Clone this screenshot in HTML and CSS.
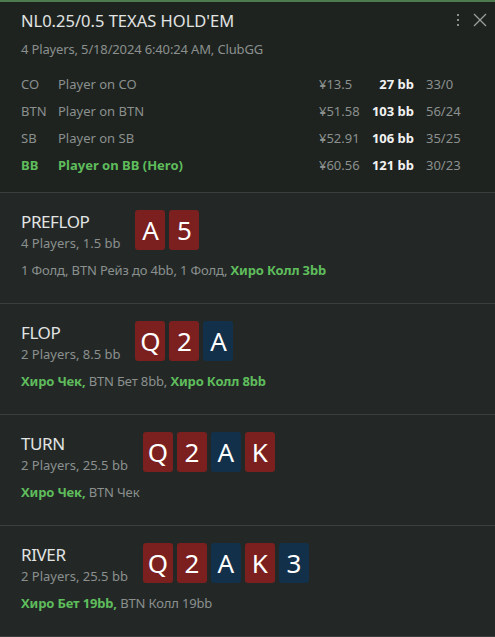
FILE: index.html
```html
<!DOCTYPE html>
<html>
<head>
<meta charset="utf-8">
<link rel="stylesheet" href="styles.css">
</head>
<body>
<div class="app">
  <header class="head">
    <div class="head-top">
      <div class="title">NL0.25/0.5 TEXAS HOLD'EM</div>
      <div class="tools">
        <svg class="dots" width="4" height="14" viewBox="0 0 4 14"><rect x="1" y="1" width="2" height="2" fill="#8a8f8c"/><rect x="1" y="6" width="2" height="2" fill="#8a8f8c"/><rect x="1" y="11" width="2" height="2" fill="#8a8f8c"/></svg>
        <svg class="close" width="14" height="14" viewBox="0 0 14 14"><path d="M1 1 L13 13 M13 1 L1 13" stroke="#9a9e9c" stroke-width="1.3" fill="none"/></svg>
      </div>
    </div>
    <div class="sub">4 Players, 5/18/2024 6:40:24 AM, ClubGG</div>
    <div class="players">
      <div class="prow"><span class="pos">CO</span><span class="pname">Player on CO</span><span class="money">¥13.5</span><span class="bb">27 bb</span><span class="stat">33/0</span></div>
      <div class="prow"><span class="pos">BTN</span><span class="pname">Player on BTN</span><span class="money">¥51.58</span><span class="bb">103 bb</span><span class="stat">56/24</span></div>
      <div class="prow"><span class="pos">SB</span><span class="pname">Player on SB</span><span class="money">¥52.91</span><span class="bb">106 bb</span><span class="stat">35/25</span></div>
      <div class="prow hero"><span class="pos">BB</span><span class="pname">Player on BB (Hero)</span><span class="money">¥60.56</span><span class="bb">121 bb</span><span class="stat">30/23</span></div>
    </div>
  </header>

  <section class="street">
    <div class="street-top">
      <div class="sinfo"><div class="sname">PREFLOP</div><div class="smeta">4 Players, 1.5 bb</div></div>
      <div class="cards"><span class="card red">A</span><span class="card red">5</span></div>
    </div>
    <div class="actions">1 Фолд, BTN Рейз до 4bb, 1 Фолд, <b class="g">Хиро Колл 3bb</b></div>
  </section>

  <section class="street">
    <div class="street-top">
      <div class="sinfo"><div class="sname">FLOP</div><div class="smeta">2 Players, 8.5 bb</div></div>
      <div class="cards"><span class="card red">Q</span><span class="card red">2</span><span class="card blue">A</span></div>
    </div>
    <div class="actions"><b class="g">Хиро Чек,</b> BTN Бет 8bb, <b class="g">Хиро Колл 8bb</b></div>
  </section>

  <section class="street">
    <div class="street-top">
      <div class="sinfo"><div class="sname">TURN</div><div class="smeta">2 Players, 25.5 bb</div></div>
      <div class="cards"><span class="card red">Q</span><span class="card red">2</span><span class="card blue">A</span><span class="card red">K</span></div>
    </div>
    <div class="actions"><b class="g">Хиро Чек,</b> BTN Чек</div>
  </section>

  <section class="street">
    <div class="street-top">
      <div class="sinfo"><div class="sname">RIVER</div><div class="smeta">2 Players, 25.5 bb</div></div>
      <div class="cards"><span class="card red">Q</span><span class="card red">2</span><span class="card blue">A</span><span class="card red">K</span><span class="card blue">3</span></div>
    </div>
    <div class="actions"><b class="g">Хиро Бет 19bb,</b> BTN Колл 19bb</div>
  </section>
</div>
</body>
</html>
```
FILE: styles.css
```css
* { box-sizing: border-box; }
html, body { margin: 0; padding: 0; }
body {
  width: 495px;
  height: 637px;
  overflow: hidden;
  background: #232827;
  font-family: "Noto Sans", "Open Sans", sans-serif;
  color: #8b908e;
}
.app { display: flex; flex-direction: column; }
.head {
  background: #1e2320;
  border-top: 2px solid #4d7b4d;
  border-bottom: 1px solid #3a3f3e;
  padding: 7px 0 14px 21px;
}
.head-top { display: flex; justify-content: space-between; align-items: flex-start; }
.title { font-size: 16.5px; color: #e2e4e3; line-height: 24px; }
.tools { display: flex; align-items: center; gap: 13px; padding: 4px 8px 0 0; }
.dots { display: block; }
.close { display: block; }
.sub { font-size: 13px; line-height: 18px; margin-top: 7px; color: #8b908e; letter-spacing: -0.15px; }
.players { margin-top: 12px; display: flex; flex-direction: column; }
.prow {
  display: flex;
  align-items: center;
  height: 27px;
  font-size: 13px;
  white-space: nowrap;
}
.pos { width: 37px; }
.pname { width: 261px; }
.money { width: 50px; }
.bb { width: 45px; text-align: right; color: #f2f2f2; font-weight: 700; }
.stat { margin-left: 12px; }
.hero .pos, .hero .pname { color: #5fbd5c; font-weight: 700; }
.street {
  height: 111px;
  border-bottom: 1px solid #3a3f3e;
  padding: 17px 0 0 21px;
}
.street-top { display: flex; align-items: flex-start; }
.sinfo { padding-top: 0; }
.sname { font-size: 17px; line-height: 24px; color: #e2e4e3; letter-spacing: -0.4px; }
.smeta { font-size: 13px; line-height: 18px; color: #8b908e; }
.cards { display: flex; gap: 4px; margin-left: 15px; }
.card {
  width: 30px;
  height: 40px;
  border-radius: 3px;
  color: #fff;
  font-size: 26px;
  display: flex;
  align-items: center;
  justify-content: center;
}
.red { background: #7b1f1f; }
.blue { background: #13304b; }
.actions { font-size: 13px; margin-top: 9px; color: #8b908e; letter-spacing: -0.15px; }
.g { color: #5fbd5c; font-weight: 700; }
```
